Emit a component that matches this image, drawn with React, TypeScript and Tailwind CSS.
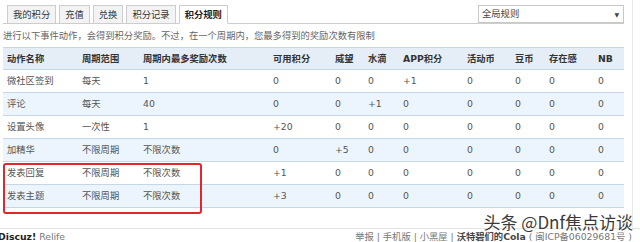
const tabs = ["我的积分", "充值", "兑换", "积分记录", "积分规则"]

const headers = ["动作名称", "周期范围", "周期内最多奖励次数", "可用积分", "威望", "水滴", "APP积分", "活动币", "豆币", "存在感", "NB"]

const rows = [
    ["微社区签到", "每天", "1", "0", "0", "0", "+1", "0", "0", "0", "0"],
    ["评论", "每天", "40", "0", "0", "+1", "0", "0", "0", "0", "0"],
    ["设置头像", "一次性", "1", "+20", "0", "0", "0", "0", "0", "0", "0"],
    ["加精华", "不限周期", "不限次数", "0", "+5", "0", "0", "0", "0", "0", "0"],
    ["发表回复", "不限周期", "不限次数", "+1", "0", "0", "0", "0", "0", "0", "0"],
    ["发表主题", "不限周期", "不限次数", "+3", "0", "0", "0", "0", "0", "0", "0"],
]

const cols = "grid grid-cols-[75px_61px_130px_62px_33px_35px_64px_48px_34px_49px_30px]"

export default function App() {
    return (
        <div className="relative w-[640px] h-[242px] overflow-hidden bg-white text-[9.3px] text-[#555] font-['DejaVu_Sans','Noto_Sans_CJK_SC',sans-serif]">
            <div className="w-[633px] h-[228px] pl-[3px] pr-[8px] border-r border-[#e8e8e8]">
                {/* Tabs */}
                <div className="flex items-end h-[24px] pl-[4px] gap-[3px] border-b border-[#cdcdcd]">
                    {tabs.map((t, i) => (
                        <div
                            key={t}
                            className={
                                i === 4
                                    ? "h-[19px] -mb-px px-[5px] flex items-center border border-[#cdcdcd] border-b-white bg-white text-[#222] font-bold"
                                    : "h-[19px] -mb-px px-[5px] flex items-center border border-[#cdcdcd] bg-[#f3f3f3] text-[#333]"
                            }
                        >
                            {t}
                        </div>
                    ))}
                    <div className="ml-auto self-start mt-[5px] h-[18px] w-[146px] border border-[#c8c8c8] bg-white flex items-center justify-between pl-[3px] pr-[4px] text-[#444]">
                        <span>全局规则</span>
                        <span className="text-[6px]">▼</span>
                    </div>
                </div>

                {/* Description */}
                <div className="h-[23px] flex items-center text-[#666]">
                    进行以下事件动作，会得到积分奖励。不过，在一个周期内，您最多得到的奖励次数有限制
                </div>

                {/* Table */}
                <div className="relative">
                    <div className={`${cols} h-[23px] items-center bg-[#e5eef6] border-t border-b border-[#c5d6e4] text-[#333] font-semibold`}>
                        {headers.map((h) => (
                            <div key={h} className="pl-[4px] whitespace-nowrap">{h}</div>
                        ))}
                    </div>
                    {rows.map((r, i) => (
                        <div
                            key={r[0]}
                            className={`${cols} h-[23px] items-center border-b border-[#c5d6e4] ${i % 2 === 1 ? "bg-[#ecf5fd]" : "bg-white"}`}
                        >
                            {r.map((c, j) => (
                                <div key={j} className="pl-[4px] whitespace-nowrap">{c}</div>
                            ))}
                        </div>
                    ))}
                    {/* highlight */}
                    <div className="absolute left-0 top-[116px] w-[199px] h-[51px] border-2 border-[#e3262b] rounded-[3px]" />
                </div>
            </div>

            {/* Footer */}
            <div className="border-t border-[#e2e2e2] h-[14px] flex items-end justify-between pl-0 pr-[8px] text-[#777]">
                <div className="-ml-[2px] leading-[11px]">
                    <span className="font-bold text-[#222]">Discuz!</span> Relife
                </div>
                <div className="leading-[11px] whitespace-nowrap">
                    举报 | 手机版 | 小黑屋 | <span className="font-bold text-[#444]">沃特碧们的Cola</span> ( 闽ICP备06029681号 )
                </div>
            </div>

            {/* watermark */}
            <div className="absolute right-[7px] top-[212px] text-[17px] leading-[20px] text-[#3a3a3a] font-['Noto_Sans_CJK_SC',sans-serif] [text-shadow:0_0_2px_#fff,0_0_2px_#fff]">
                头条 @Dnf焦点访谈
            </div>
        </div>
    )
}
